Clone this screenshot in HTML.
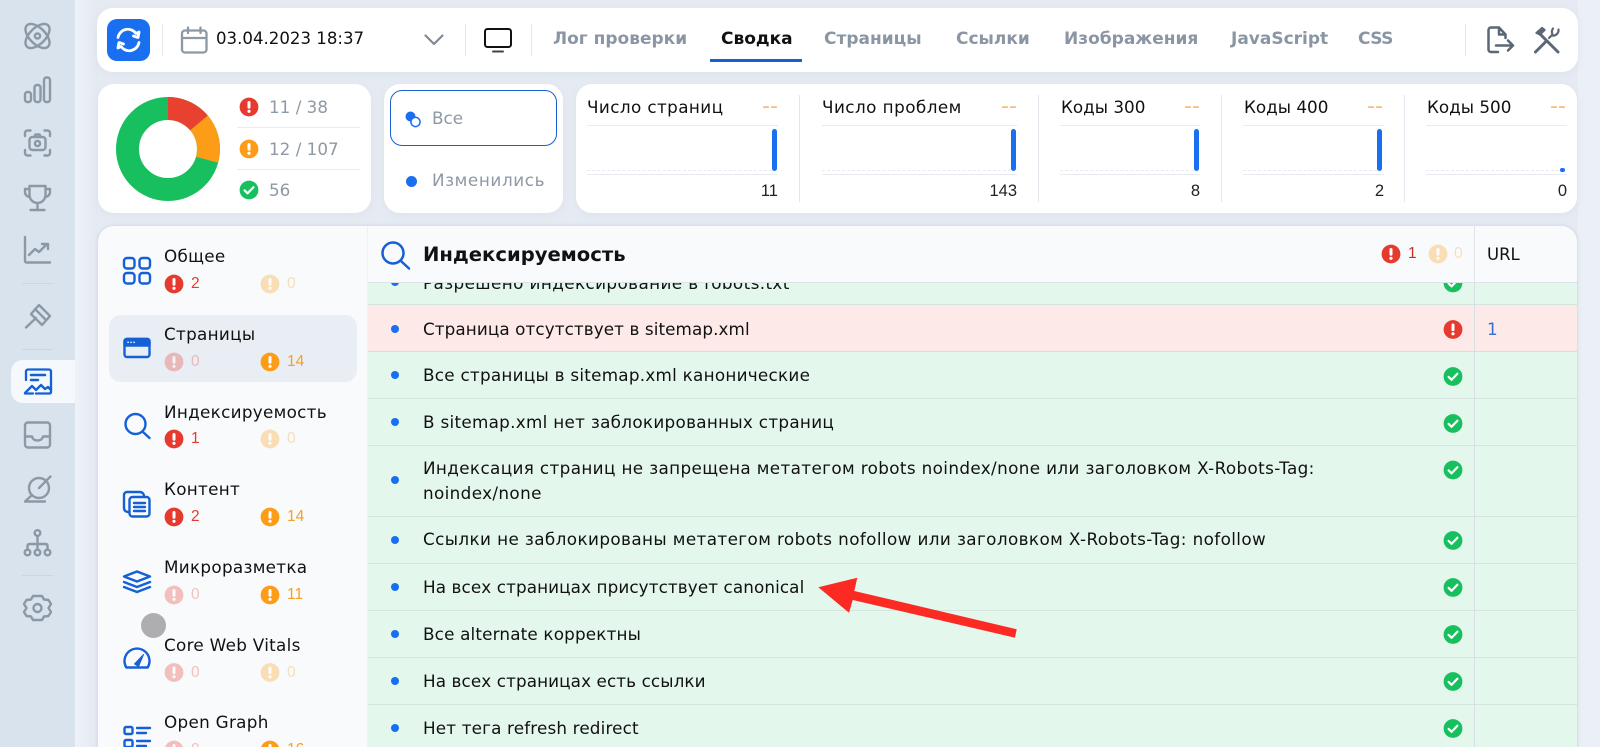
<!DOCTYPE html>
<html lang="ru"><head><meta charset="utf-8"><title>Сводка</title>
<style>
html,body{margin:0;padding:0;width:1600px;height:747px;overflow:hidden;background:#e6ebf3;font-family:"DejaVu Sans","Liberation Sans",sans-serif;color:#111}
*{box-sizing:border-box}
#p{position:absolute;left:0;top:0;width:1600px;height:747px;overflow:hidden}
.a,.t{position:absolute}
.t{height:24px;line-height:24px;white-space:nowrap;font-size:16.8px}
svg{position:absolute;overflow:visible}
.side{left:0;top:0;width:75px;height:747px;background:#d9e3ee}
.card{background:#fff;border-radius:16px;box-shadow:0 2px 10px rgba(120,140,170,.08)}
.hr{background:#cdd6e0;height:1px}
.tab{font-weight:700;color:#8a96a3;font-size:17px}
.lg{color:#8e99a5;font-size:16.8px}
.sep{background:#e8ecf1;height:1px}
.mt{font-size:16.8px;color:#111}
.dash{color:#f6bd80;font-size:22px}
.vd{background:#e3e8ee;width:1px;top:95px;height:107px}
.bar{background:#1a6ff0;width:5px;top:129px;height:42px;border-radius:3px}
.dl{top:170px;height:0;border-top:1px dashed #e8ecf1}
.val{font-size:16.5px;color:#222;text-align:right;font-family:"Liberation Sans",sans-serif}
.nt{font-size:16.8px;color:#111;letter-spacing:.3px}
.n{font-size:15.5px;font-family:"Liberation Sans",sans-serif}
.r{color:#e53b2f}.o{color:#f5a028}
.f{opacity:.3}
.row{left:368px;width:1209px;height:47px;background:#e4f7ed;border-bottom:1.5px solid #d3e5de}
.rt{font-size:16.8px;color:#111;left:423px}
.dot{width:8px;height:8px;border-radius:50%;background:#1a6ff0;left:391px}
</style></head><body><div id="p">
<svg width="0" height="0" style="position:absolute"><defs>
<g id="err"><circle cx="0" cy="0" r="9.4" fill="#e63a2e"/><rect x="-1.5" y="-6" width="3" height="7.8" rx="1.5" fill="#fff"/><circle cx="0" cy="4.3" r="1.6" fill="#fff"/></g>
<g id="wrn"><circle cx="0" cy="0" r="9.4" fill="#fd9c16"/><rect x="-1.5" y="-6" width="3" height="7.8" rx="1.5" fill="#fff"/><circle cx="0" cy="4.3" r="1.6" fill="#fff"/></g>
<g id="ok"><circle cx="0" cy="0" r="9.4" fill="#18bf5f"/><path d="M-4.4 .4L-1.4 3.3 4.4-2.8" fill="none" stroke="#fff" stroke-width="2.2" stroke-linecap="round" stroke-linejoin="round"/></g>
</defs></svg>

<!-- side rail -->
<div class="a side"></div>
<div class="a" style="left:75px;top:0;width:23px;height:747px;background:linear-gradient(90deg,#eef2f8,#e4e9f2)"></div>
<div class="a" style="left:1578px;top:0;width:22px;height:747px;background:#ebeff6"></div>
<div class="a hr" style="left:22px;top:283px;width:31px"></div>
<div class="a hr" style="left:22px;top:349px;width:31px"></div>
<div class="a hr" style="left:22px;top:575px;width:31px"></div>
<div class="a" style="left:11px;top:360px;width:64px;height:43px;background:#f5f8fc;border-radius:12px 0 0 12px"></div>
<svg width="75" height="747" style="left:0;top:0" fill="none" stroke="#8d98a5" stroke-width="2.4" stroke-linecap="round" stroke-linejoin="round">
<g transform="translate(37.5 36)"><ellipse rx="15" ry="8" transform="rotate(45)"/><ellipse rx="15" ry="8" transform="rotate(-45)"/><circle r="2.6"/></g>
<g><rect x="25" y="92" width="6" height="10" rx="2.5"/><rect x="34.5" y="85" width="6" height="17" rx="2.5"/><rect x="44" y="77.5" width="6" height="24.5" rx="2.5"/></g>
<g transform="translate(37.5 143)"><path d="M-12.5-7V-10a2.5 2.5 0 0 1 2.5-2.5H-7M7-12.5H10a2.5 2.5 0 0 1 2.5 2.5V-7M12.5 7V10a2.5 2.5 0 0 1-2.5 2.5H7M-7 12.5H-10a2.5 2.5 0 0 1-2.5-2.5V7"/><rect x="-8" y="-6" width="16" height="13" rx="3"/><path d="M-3-6l1-2.5h4L3-6"/><circle cy=".5" r="2.6"/></g>
<g transform="translate(37.5 197)"><path d="M-8-11H8V-2A8 8 0 0 1-8-2ZM-8-8H-12.5V-5.500A5 5 0 0 0-7.500 0M8-8H12.500V-5.500A5 5 0 0 1 7.500 0M0 6V12M-7 13H7"/></g>
<g><path d="M25 237V261a1.500 1.500 0 0 0 1.500 1.500H50M29 255l6-6 4 3 8-8M42 244h6v5"/></g>
<path d="M39 305L50 316 42 325 31 314ZM35 309L46 320M36 318L26 327.500"/>
<g transform="translate(37.500 435)"><rect x="-12.500" y="-12.500" width="25" height="25" rx="3"/><path d="M-12.500 1.500h7q1 4 5.500 4t5.500-4h7"/></g>
<circle cx="39" cy="488" r="10"/><path d="M39 488L50.500 476.500M25 501.500H45M25 501.500L32 495"/>
<g transform="translate(37.500 543)"><circle cy="-10" r="2.800"/><circle cx="-10" cy="9.500" r="2.800"/><circle cy="9.500" r="2.800"/><circle cx="10" cy="9.500" r="2.800"/><path d="M0-7V6.500M-10 6.500V3q0-2 2-2H8q2 0 2 2V6.500"/></g>
<g transform="translate(37.500 608)"><path d="M-4.500-12h9l2 3.500 4.500.5 2.500 4-2.500 4 2.500 4-2.500 4-4.500.500-2 3.500h-9l-2-3.500-4.500-.500-2.500-4 2.500-4-2.500-4 2.500-4 4.500-.500z"/><circle r="4"/></g>
</svg>
<svg width="30" height="30" style="left:23px;top:367px" fill="none" stroke="#1560d6" stroke-width="2.300" stroke-linecap="round" stroke-linejoin="round"><path d="M3 13V4.500a2 2 0 0 1 2-2H26a2 2 0 0 1 2 2V25a1.500 1.500 0 0 1-1.500 1.500H13"/><path d="M8 8H22M8 13H15" stroke-width="2.500"/><path d="M2 26L9 19l4 4 5-5 4 4 3-2 3 3" /><path d="M2 26.500h8"/></svg>

<!-- top bar -->
<div class="a card" style="left:97px;top:8px;width:1481px;height:64px"></div>
<div class="a" style="left:107px;top:19px;width:43px;height:42px;background:#1a6ff0;border-radius:10px"></div>
<svg width="43" height="42" style="left:107px;top:19px" fill="none" stroke="#fff" stroke-width="2.800" stroke-linecap="round" stroke-linejoin="round"><path d="M11 18.500A10 10 0 0 1 29 14.500L32 13M32 13.500L31 18.500 26.500 17M32 23.500A10 10 0 0 1 14 27.500L11 29M11 28.500L12 23.500 16.500 25"/></svg>
<div class="a" style="left:161.500px;top:24px;width:1px;height:32px;background:#e4e7eb"></div>
<div class="a" style="left:465px;top:24px;width:1px;height:32px;background:#e4e7eb"></div>
<div class="a" style="left:531px;top:24px;width:1px;height:32px;background:#e4e7eb"></div>
<div class="a" style="left:1465px;top:24px;width:1px;height:32px;background:#e4e7eb"></div>
<svg width="30" height="30" style="left:180px;top:26px" fill="none" stroke="#8d98a5" stroke-width="2.300" stroke-linecap="round" stroke-linejoin="round"><rect x="2" y="4.500" width="24.500" height="22" rx="3"/><path d="M2 12H26.500M8 1.500V7M20.500 1.500V7"/></svg>
<div class="t" style="left:216px;top:27px;font-size:16.600px;color:#111">03.04.2023 18:37</div>
<svg width="20" height="14" style="left:424px;top:33px" fill="none" stroke="#7f8a96" stroke-width="2.200" stroke-linecap="round" stroke-linejoin="round"><path d="M1.500 2.500L10 11l8.500-8.500"/></svg>
<svg width="30" height="26" style="left:484px;top:28px" fill="none" stroke="#111" stroke-width="2" stroke-linecap="round" stroke-linejoin="round"><rect x="1" y="1" width="26" height="18" rx="2.500"/><path d="M9 23.500H19" stroke="#444"/></svg>
<div class="t tab" style="left:553px;top:27px">Лог проверки</div>
<div class="t tab" style="left:721px;top:27px;color:#111">Сводка</div>
<div class="a" style="left:710px;top:59px;width:92px;height:2.500px;background:#1a5fd0"></div>
<div class="t tab" style="left:824px;top:27px">Страницы</div>
<div class="t tab" style="left:956px;top:27px">Ссылки</div>
<div class="t tab" style="left:1064px;top:27px">Изображения</div>
<div class="t tab" style="left:1231px;top:27px">JavaScript</div>
<div class="t tab" style="left:1358px;top:27px;letter-spacing:-.6px">CSS</div>
<svg width="30" height="30" style="left:1486px;top:26px" fill="none" stroke="#5c6774" stroke-width="2.500" stroke-linecap="round" stroke-linejoin="round"><path d="M12 26H5a2.500 2.500 0 0 1-2.500-2.500V4A2.500 2.500 0 0 1 5 1.500h8l6.500 7V12M13 1.500V8.500h6.500"/><path d="M10 19.500H27M22 14.500l5 5-5 5"/></svg>
<svg width="30" height="30" style="left:1533px;top:26px" fill="none" stroke="#5c6774" stroke-width="3" stroke-linecap="round" stroke-linejoin="round"><path d="M2.500 26L13 15.500M5 6l20 20"/><path d="M3 7L9 1.500 12 4 7 9z" fill="#5c6774" stroke-width="1.500"/><path d="M16 12l3.500-3.500a6 6 0 0 1 .5-6M25.500 3.500A5.500 5.500 0 0 1 19 9.500" stroke-width="2.200"/></svg>

<!-- donut -->
<div class="a card" style="left:98px;top:84px;width:273px;height:129px"></div>
<svg width="110" height="110" viewBox="-55 -55 110 110" style="left:113px;top:94px">
<circle r="40.500" fill="none" stroke="#18bf5f" stroke-width="23"/>
<path d="M0-52A52 52 0 0 1 39.800-33.500L22.200-18.700A29 29 0 0 0 0-29Z" fill="#e8412f"/>
<path d="M39.800-33.500A52 52 0 0 1 50.100 13.800L28 7.700A29 29 0 0 0 22.200-18.700Z" fill="#fd9c16"/>
</svg>
<svg width="20" height="120" style="left:239px;top:97px"><use href="#err" transform="translate(10 10)"/><use href="#wrn" transform="translate(10 52)"/><use href="#ok" transform="translate(10 93)"/></svg>
<div class="t lg" style="left:269px;top:95px">11 / 38</div>
<div class="t lg" style="left:269px;top:137px">12 / 107</div>
<div class="t lg" style="left:269px;top:178px">56</div>
<div class="a sep" style="left:237px;top:127px;width:123px"></div>
<div class="a sep" style="left:237px;top:169px;width:123px"></div>

<!-- filter -->
<div class="a card" style="left:384px;top:84px;width:179px;height:129px"></div>
<div class="a" style="left:390px;top:90px;width:167px;height:56px;border:1.500px solid #1a5fd0;border-radius:12px"></div>
<svg width="20" height="20" style="left:404px;top:110px"><circle cx="6.500" cy="6.500" r="5" fill="#1a6ff0"/><circle cx="11.500" cy="12" r="4.600" fill="#fff" stroke="#1a6ff0" stroke-width="1.500"/></svg>
<div class="t lg" style="left:432px;top:106px">Все</div>
<div class="a" style="left:405.500px;top:175.500px;width:11px;height:11px;border-radius:50%;background:#1a6ff0"></div>
<div class="t lg" style="left:432px;top:168px;letter-spacing:.6px">Изменились</div>

<!-- metrics -->
<div class="a card" style="left:576px;top:84px;width:1001px;height:129px"></div>
<div class="a vd" style="left:799px"></div><div class="a vd" style="left:1038px"></div><div class="a vd" style="left:1221px"></div><div class="a vd" style="left:1404px"></div>

<div class="t mt" style="left:587px;top:95px;letter-spacing:.4px">Число страниц</div><div class="t dash" style="left:762px;top:95px">--</div>
<div class="a sep" style="left:587px;top:125px;width:191px"></div><div class="a sep" style="left:587px;top:174px;width:191px"></div><div class="a dl" style="left:587px;width:185px"></div><div class="a bar" style="left:772px"></div>
<div class="t val" style="left:700px;width:78px;top:179px">11</div>

<div class="t mt" style="left:822px;top:95px;letter-spacing:.45px">Число проблем</div><div class="t dash" style="left:1001px;top:95px">--</div>
<div class="a sep" style="left:822px;top:125px;width:195px"></div><div class="a sep" style="left:822px;top:174px;width:195px"></div><div class="a dl" style="left:822px;width:189px"></div><div class="a bar" style="left:1011px"></div>
<div class="t val" style="left:940px;width:77px;top:179px">143</div>

<div class="t mt" style="left:1061px;top:95px">Коды 300</div><div class="t dash" style="left:1184px;top:95px">--</div>
<div class="a sep" style="left:1060px;top:125px;width:140px"></div><div class="a sep" style="left:1060px;top:174px;width:140px"></div><div class="a dl" style="left:1060px;width:134px"></div><div class="a bar" style="left:1194px"></div>
<div class="t val" style="left:1120px;width:80px;top:179px">8</div>

<div class="t mt" style="left:1244px;top:95px">Коды 400</div><div class="t dash" style="left:1367px;top:95px">--</div>
<div class="a sep" style="left:1243px;top:125px;width:141px"></div><div class="a sep" style="left:1243px;top:174px;width:141px"></div><div class="a dl" style="left:1243px;width:134px"></div><div class="a bar" style="left:1377px"></div>
<div class="t val" style="left:1300px;width:84px;top:179px">2</div>

<div class="t mt" style="left:1427px;top:95px">Коды 500</div><div class="t dash" style="left:1550px;top:95px">--</div>
<div class="a sep" style="left:1426px;top:125px;width:141px"></div><div class="a sep" style="left:1426px;top:174px;width:141px"></div><div class="a dl" style="left:1426px;width:133px"></div><div class="a bar" style="left:1560px;top:168px;height:3.500px"></div>
<div class="t val" style="left:1480px;width:87px;top:179px">0</div>

<!-- main panel -->
<div class="a" style="left:98px;top:226px;width:1479px;height:530px;background:#f8fafc;border-radius:16px 16px 0 0;box-shadow:0 0 4px rgba(120,140,170,.25)"></div>

<!-- rows -->
<div class="a row" style="top:258px"></div>
<div class="a row" style="top:305px;background:#fde9e8;border-bottom-color:#e3d8d8"></div>
<div class="a row" style="top:352px"></div>
<div class="a row" style="top:399px"></div>
<div class="a row" style="top:446px;height:71px"></div>
<div class="a row" style="top:517px"></div>
<div class="a row" style="top:564px"></div>
<div class="a row" style="top:611px"></div>
<div class="a row" style="top:658px"></div>
<div class="a row" style="top:705px"></div>
<div class="a" style="left:1474px;top:226px;width:1px;height:521px;background:#d6e0e2;z-index:3"></div>

<div class="a dot" style="top:278px"></div><div class="t rt" style="top:271px;letter-spacing:.4px">Разрешено индексирование в robots.txt</div>
<div class="a dot" style="top:325px"></div><div class="t rt" style="top:317px;letter-spacing:.09px">Страница отсутствует в sitemap.xml</div>
<div class="a dot" style="top:371px"></div><div class="t rt" style="top:363px;letter-spacing:.26px">Все страницы в sitemap.xml канонические</div>
<div class="a dot" style="top:418px"></div><div class="t rt" style="top:410px;letter-spacing:.3px">В sitemap.xml нет заблокированных страниц</div>
<div class="a dot" style="top:476px"></div><div class="t rt" style="top:456px;letter-spacing:.37px">Индексация страниц не запрещена метатегом robots noindex/none или заголовком X-Robots-Tag:</div><div class="t rt" style="top:481px;letter-spacing:.37px">noindex/none</div>
<div class="a dot" style="top:536px"></div><div class="t rt" style="top:527px;letter-spacing:.4px">Ссылки не заблокированы метатегом robots nofollow или заголовком X-Robots-Tag: nofollow</div>
<div class="a dot" style="top:583px"></div><div class="t rt" style="top:575px;letter-spacing:.1px">На всех страницах присутствует canonical</div>
<div class="a dot" style="top:630px"></div><div class="t rt" style="top:622px;letter-spacing:.17px">Все alternate корректны</div>
<div class="a dot" style="top:677px"></div><div class="t rt" style="top:669px;letter-spacing:.1px">На всех страницах есть ссылки</div>
<div class="a dot" style="top:724px"></div><div class="t rt" style="top:716px;letter-spacing:.16px">Нет тега refresh redirect</div>

<svg width="24" height="747" style="left:1441px;top:0"><use href="#ok" transform="translate(12 283)"/><use href="#err" transform="translate(12 329.500)"/><use href="#ok" transform="translate(12 376.500)"/><use href="#ok" transform="translate(12 423.500)"/><use href="#ok" transform="translate(12 470)"/><use href="#ok" transform="translate(12 540.500)"/><use href="#ok" transform="translate(12 587.500)"/><use href="#ok" transform="translate(12 634.500)"/><use href="#ok" transform="translate(12 681.500)"/><use href="#ok" transform="translate(12 728.500)"/></svg>
<div class="t" style="left:1487px;top:317px;font-size:16.800px;color:#3b6fcf">1</div>

<!-- header -->
<div class="a" style="left:368px;top:226px;width:1209px;height:57px;background:#f8fafc;border-radius:0 16px 0 0;border-bottom:1.500px solid #d9e4e6;z-index:2"></div>
<div class="a" style="left:1474px;top:226px;width:1px;height:57px;background:#dfe5ea;z-index:3"></div>
<div class="a" style="left:367px;top:226px;width:1px;height:521px;background:#eef2f5;z-index:3"></div>
<div style="position:absolute;left:0;top:0;width:1600px;height:747px;z-index:4">
<svg width="30" height="30" style="left:381px;top:241px" fill="none" stroke="#1560d6" stroke-width="2.500" stroke-linecap="round"><circle cx="12" cy="12" r="10.500"/><path d="M20 20L28 27.500"/></svg>
<div class="t" style="left:423px;top:243px;font-weight:700;font-size:19.600px;color:#111">Индексируемость</div>
<svg width="80" height="24" style="left:1379px;top:242px"><use href="#err" transform="translate(12 12)"/><use href="#wrn" transform="translate(59 12)" opacity=".3"/></svg>
<div class="t n r" style="left:1408px;top:242px;color:#c9302a">1</div><div class="t n o f" style="left:1454px;top:242px">0</div>
<div class="t" style="left:1487px;top:243px;font-size:16.500px">URL</div>
</div>

<!-- left nav -->
<div class="a" style="left:109px;top:315px;width:248px;height:67px;background:#e9eef4;border-radius:12px"></div>
<svg width="300" height="747" style="left:98px;top:0" fill="none" stroke="#1560d6" stroke-width="2.400" stroke-linecap="round" stroke-linejoin="round">
<g transform="translate(-98 0)">
<rect x="124" y="258" width="10.500" height="10.500" rx="3"/><rect x="139.500" y="258" width="10.500" height="10.500" rx="3"/><rect x="124" y="273" width="10.500" height="10.500" rx="3"/><rect x="139.500" y="273" width="10.500" height="10.500" rx="3"/>
<rect x="124.500" y="339" width="25" height="18" rx="2.500"/><path d="M124.500 345.500H149.500V341a2 2 0 0 0-2-2H126.500a2 2 0 0 0-2 2z" fill="#1560d6"/><path d="M128 342.300h.1M131 342.300h.1M134 342.300h.1" stroke="#fff" stroke-width="1.600"/>
<circle cx="135.500" cy="424" r="10"/><path d="M143 432L149.500 438"/>
<rect x="129.500" y="497" width="20" height="19.500" rx="3"/><path d="M128 512q-4-.500-4-4V495a3 3 0 0 1 3-3H140a4 4 0 0 1 4 4"/><path d="M134 503H145M134 507H145M134 511H145"/>
<path d="M137 571.500l13 5-13 5-13-5zM124 582l13 5 13-5M124 587l13 5 13-5"/>
<path d="M126.300 667.500A12.500 12.500 0 1 1 147.700 667.500Z"/><path d="M134.500 664L143.500 654.500 138.500 666.500Z" fill="#1560d6" stroke-width="1"/>
<rect x="124.500" y="727" width="8" height="7" rx="1.500"/><rect x="124.500" y="740" width="8" height="7" rx="1.500"/><path d="M137 728H150M137 733H146M137 741H150M137 746H146"/>
</g></svg>
<svg width="150" height="747" style="left:160px;top:0">
<use href="#err" transform="translate(14 284)"/><use href="#wrn" transform="translate(110 284)" opacity=".3"/>
<use href="#err" transform="translate(14 362)" opacity=".3"/><use href="#wrn" transform="translate(110 362)"/>
<use href="#err" transform="translate(14 439)"/><use href="#wrn" transform="translate(110 439)" opacity=".3"/>
<use href="#err" transform="translate(14 517)"/><use href="#wrn" transform="translate(110 517)"/>
<use href="#err" transform="translate(14 595)" opacity=".3"/><use href="#wrn" transform="translate(110 595)"/>
<use href="#err" transform="translate(14 672.500)" opacity=".3"/><use href="#wrn" transform="translate(110 672.500)" opacity=".3"/>
<use href="#err" transform="translate(14 750)" opacity=".3"/><use href="#wrn" transform="translate(110 750)"/>
</svg>
<div class="t nt" style="left:164px;top:244px">Общее</div><div class="t n r" style="left:191px;top:272px">2</div><div class="t n o f" style="left:287px;top:272px">0</div>
<div class="t nt" style="left:164px;top:322px">Страницы</div><div class="t n r f" style="left:191px;top:350px">0</div><div class="t n o" style="left:287px;top:350px">14</div>
<div class="t nt" style="left:164px;top:400px">Индексируемость</div><div class="t n r" style="left:191px;top:427px">1</div><div class="t n o f" style="left:287px;top:427px">0</div>
<div class="t nt" style="left:164px;top:477px">Контент</div><div class="t n r" style="left:191px;top:505px">2</div><div class="t n o" style="left:287px;top:505px">14</div>
<div class="t nt" style="left:164px;top:555px">Микроразметка</div><div class="t n r f" style="left:191px;top:583px">0</div><div class="t n o" style="left:287px;top:583px">11</div>
<div class="t nt" style="left:164px;top:633px">Core Web Vitals</div><div class="t n r f" style="left:191px;top:661px">0</div><div class="t n o f" style="left:287px;top:661px">0</div>
<div class="t nt" style="left:164px;top:710px">Open Graph</div><div class="t n r f" style="left:191px;top:738px">0</div><div class="t n o" style="left:287px;top:738px">16</div>
<div class="a" style="left:140.500px;top:612.500px;width:25px;height:25px;border-radius:50%;background:#aeaeb0;z-index:6"></div>

<!-- arrow -->
<svg width="1600" height="747" style="left:0;top:0;z-index:7"><path d="M818.300 587.300L857.300 577.700 854.300 591 1016.700 629.300 1015 637.700 852.700 600 849 612.700Z" fill="#fb2b24"/></svg>
</div></body></html>
